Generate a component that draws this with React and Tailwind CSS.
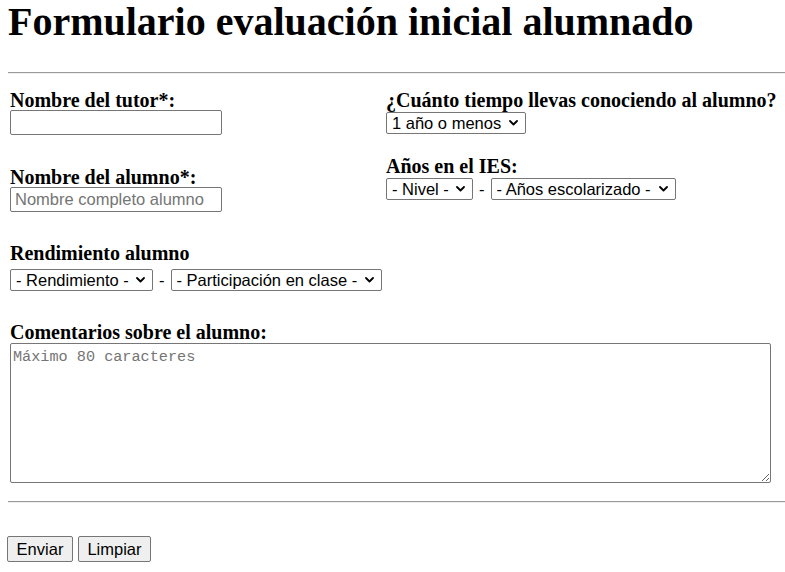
import React from 'react';

// Chevron used by the native-looking dropdowns
const Chevron = () => (
  <svg className="w-[9px] h-[6px] ml-[7px] mr-[7px] shrink-0" viewBox="0 0 9 6" fill="none">
    <path d="M1 1l3.5 3.5L8 1" stroke="#000" strokeWidth="1.8" strokeLinecap="round" strokeLinejoin="round" />
  </svg>
);

const Select = ({ label }) => (
  <span className="inline-flex items-center h-[22px] border border-[#767676] rounded-[2px] bg-white pl-[5px] font-['Liberation_Sans',sans-serif] text-[16.5px] leading-[19px] text-black">
    <select className="appearance-none bg-transparent outline-none">
      <option>{label}</option>
    </select>
    <Chevron />
  </span>
);

const Label = ({ children, className = '' }) => (
  <h3 className={`text-[20px] leading-[20px] font-bold ${className}`}>{children}</h3>
);

const TextInput = ({ placeholder = '' }) => (
  <input
    type="text"
    placeholder={placeholder}
    className="block w-[212px] h-[25px] border border-[#767676] rounded-[2px] px-[4px] font-['Liberation_Sans',sans-serif] text-[16.5px] placeholder:text-[#757575] outline-none"
  />
);

const Dash = () => <span className="font-['Liberation_Sans',sans-serif] text-[16.5px] leading-[19px] mx-[6px]">-</span>;

const Button = ({ children, className = '' }) => (
  <button
    type="button"
    className={`h-[26px] border border-[#767676] rounded-[2px] bg-[#efefef] font-['Liberation_Sans',sans-serif] text-[16.5px] leading-[19px] ${className}`}
  >
    {children}
  </button>
);

export default function App() {
  return (
    <div className="min-h-screen bg-white text-black font-['Liberation_Serif',serif] pl-2">
      <h1 className="text-[40px] leading-[44px] font-bold">Formulario evaluación inicial alumnado</h1>

      <hr className="mt-[28px] border-t border-[#9a9a9a] border-b border-b-[#eeeeee]" />

      <form className="pl-[2px]">
        <div className="grid grid-cols-[376px_1fr]">
          {/* Left column */}
          <div>
            <Label className="mt-[16px]">Nombre del tutor*:</Label>
            <TextInput />
            <Label className="mt-[32px]">Nombre del alumno*:</Label>
            <TextInput placeholder="Nombre completo alumno" />
          </div>

          {/* Right column */}
          <div>
            <Label className="mt-[16px]">¿Cuánto tiempo llevas conociendo al alumno?</Label>
            <div className="flex mt-[2px]">
              <Select label="1 año o menos" />
            </div>
            <Label className="mt-[22px]">Años en el IES:</Label>
            <div className="flex items-center h-[22px] mt-[2px]">
              <Select label="- Nivel -" />
              <Dash />
              <Select label="- Años escolarizado -" />
            </div>
          </div>
        </div>

        <Label className="mt-[31px]">Rendimiento alumno</Label>
        <div className="flex items-center h-[22px] mt-[6px]">
          <Select label="- Rendimiento -" />
          <Dash />
          <Select label="- Participación en clase -" />
        </div>

        <Label className="mt-[31px]">Comentarios sobre el alumno:</Label>
        <textarea
          placeholder="Máximo 80 caracteres"
          className="block mt-[1px] w-[761px] h-[140px] border border-[#767676] rounded-[2px] px-[2px] pt-[4px] font-['Liberation_Mono',monospace] text-[15.2px] leading-[18px] placeholder:text-[#757575] outline-none"
        />

        <hr className="mt-[18px] -ml-[2px] border-t border-[#9a9a9a] border-b border-b-[#eeeeee]" />

        <div className="flex gap-[5px] mt-[33px] -ml-[3px] pb-2">
          <Button className="w-[66px]">Enviar</Button>
          <Button className="w-[73px]">Limpiar</Button>
        </div>
      </form>
    </div>
  );
}
